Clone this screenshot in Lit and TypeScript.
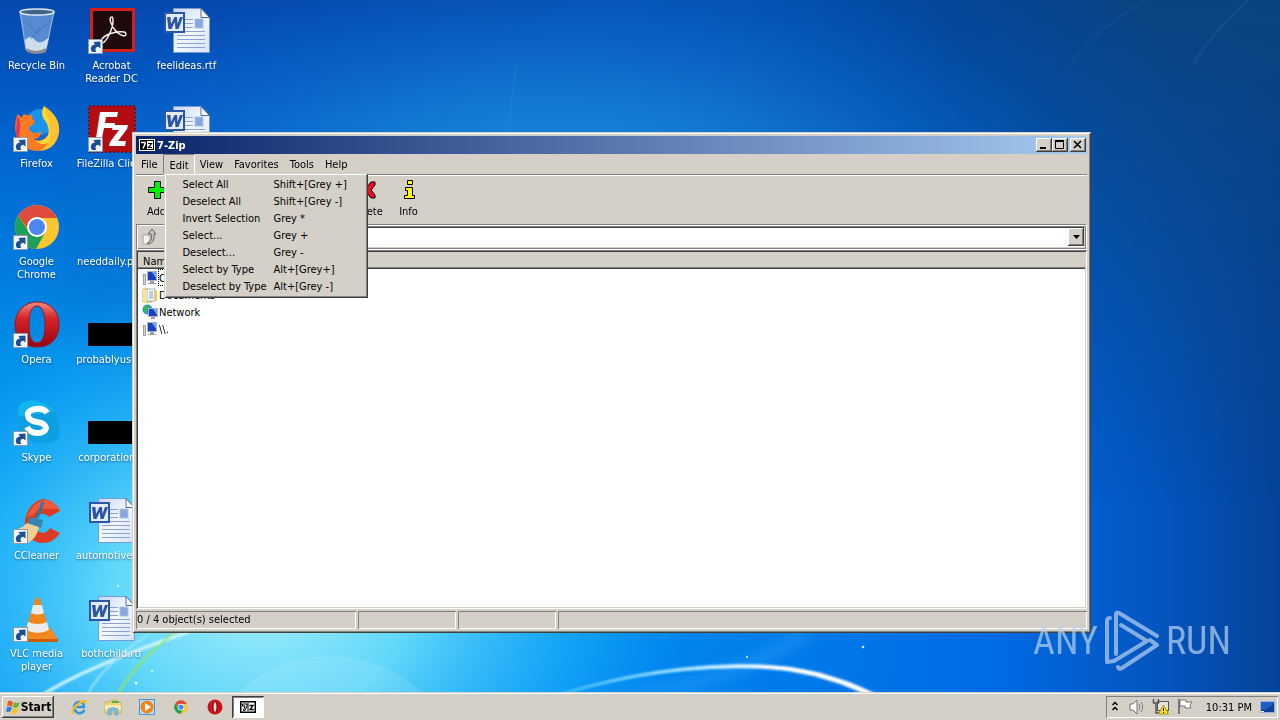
import { LitElement, html, svg, css, nothing, TemplateResult } from "lit";
import { customElement } from "lit/decorators.js";
import { classMap } from "lit/directives/class-map.js";

const shortcutArrow = svg`
  <g transform="translate(0 32)">
    <rect x=".5" y=".5" width="14" height="14" fill="#f4f6f8" stroke="#8d98a8"/>
    <path d="M4 13C1.500 9 3.500 6 7 5.500L5.500 3 12.500 2.500 12.500 9.500 10.300 7.700C7.500 8 6.800 10 8.300 13Z" fill="#1c4f94"/>
  </g>`;

const wordDoc = svg`
  <defs><linearGradient id="paper" x2="1" y2="1"><stop offset="0" stop-color="#c4d6f6"/><stop offset=".5" stop-color="#f4f8ff"/><stop offset="1" stop-color="#d4e2fa"/></linearGradient></defs>
  <path d="M10.500 1.500H38L46.500 10.500V45.500H10.500Z" fill="url(#paper)" stroke="#7a9ad4"/>
  <path d="M38 1.500V10.500H46.500Z" fill="#fff" stroke="#49689f"/>
  <rect x="32" y="12" width="8" height="9" fill="#86a8df" stroke="#a9c0ea"/>
  <path d="M22 12.500H30M22 16.500H30M22 20.500H30M22 24.500H42M14 28.500H42M14 32.500H42M14 36.500H42M14 40.500H42" stroke="#8aa3d4"/>
  <rect x="2" y="6" width="19" height="19" fill="#e3ebfa" stroke="#2b57a8" stroke-width="2"/>
  <path d="M4 10H7.500L8 17 11.500 10H14L14.500 17 17 10H20L15.500 22H12.500L11.800 15 8.500 22H5.500Z" fill="#2b54a4"/>`;

const icons: Record<string, TemplateResult> = {
  bin: svg`
    <path d="M7 5L13 43Q23 48 33 43L41 5Z" fill="#a9c9ee" fill-opacity=".5" stroke="#b9cde6" stroke-opacity=".8"/>
    <path d="M12 33Q17 27 22 33T36 30L33 42Q24 47 13 42Z" fill="#e5eaf0" fill-opacity=".85"/>
    <path d="M13 41Q23 47 33 41V45Q23 49 14 45Z" fill="#8a8c90"/>
    <ellipse cx="24" cy="5" rx="17" ry="3" fill="#40648c" stroke="#dce8f5" stroke-width="1.500"/>
    <path d="M12 14L24 26 37 14M18 32L27 20" stroke="#2d66aa" fill="none" opacity=".6"/>`,
  acrobat: svg`
    <rect x="3.500" y="2.500" width="42" height="41" fill="#1f0b0d" stroke="#d81f16" stroke-width="3"/>
    <path d="M24 10C20 10 23 18 27 23 31 28 38 31 38 27 38 23 27 25 21 27 14 30 11 35 14 36 18 36 25 22 25 14 25 11 25 10 24 10Z" fill="none" stroke="#f4eeee" stroke-width="1.500"/>
    ${shortcutArrow}`,
  word: wordDoc,
  firefox: svg`
    <circle cx="24" cy="24" r="19" fill="#1b62d4"/>
    <circle cx="27" cy="17" r="13" fill="#1a93ec"/>
    <path d="M4 10Q6 8 8 13L11 9Q14 11 18 10 20 10 19 14 23 15 21 19L16 22Q16 27 21 28 26 28 28 26 28 34 20 34 29 38 35 31 39 27 39 21 46 25 44 33 37 46 24 46 6 45 3 29 1 20 4 10Z" fill="#ff7a22"/>
    <path d="M31 1Q26 9 33 17 37 24 35 30 31 37 22 36 30 43 39 35 44 30 44 22Q42 10 31 1Z" fill="#ffd72f"/>
    <path d="M31 1Q48 12 46 28 43 44 27 46 39 38 37 25 36 12 31 1Z" fill="#ffc22d"/>
    <path d="M4 10Q9 18 6 30 9 41 18 45 4 42 3 28Z" fill="#f0304b"/>
    ${shortcutArrow}`,
  filezilla: svg`
    <rect x="1" y="1" width="46" height="46" fill="#b30d12" stroke="#7c0a10" stroke-width="2" stroke-dasharray="2 2"/>
    <path d="M12 7H30L29 12H18L17 18H27L26 23H16L14 33H8Z" fill="#fff"/>
    <path d="M25 20H40L39 24 30 36H38L37 41H21L22 37 31 25H24Z" fill="#fff"/>
    ${shortcutArrow}`,
  chrome: svg`
    <circle cx="24" cy="24" r="22" fill="#fbc62d"/>
    <path d="M5 13A22 22 0 0 1 44 15H24A9 9 0 0 0 15 26Z" fill="#e04a3d"/>
    <path d="M5 13A22 22 0 0 0 23 46L32 30A10 10 0 0 1 15 27Z" fill="#1fa05a"/>
    <circle cx="24" cy="24" r="10" fill="#fff"/><circle cx="24" cy="24" r="8" fill="#4b87ef"/>
    ${shortcutArrow}`,
  opera: svg`
    <defs><linearGradient id="op" x2="0" y2="1"><stop offset="0" stop-color="#f38d84"/><stop offset=".35" stop-color="#d8242a"/><stop offset="1" stop-color="#98040c"/></linearGradient></defs>
    <path fill-rule="evenodd" d="M24 1C37 1 46 10 46 24S37 46 24 46 2 37 2 24 11 1 24 1ZM24 5C18 5 16 13 16 24S18 42 24 42 32 34 32 24 30 5 24 5Z" fill="url(#op)" stroke="#a3121a"/>
    ${shortcutArrow}`,
  skype: svg`
    <path d="M13 2Q20 0 26 3 44 5 44 21 48 30 46 38 40 46 31 44 8 44 5 24 1 8 13 2Z" fill="#0c9fe2"/>
    <path d="M13 2Q20 0 26 3 36 5 41 12L6 18Q2 6 13 2Z" fill="#12b5ee"/>
    <path d="M34 14Q31 9 23 10 14 11 15 17 16 22 24 23T33 29Q32 34 24 34 17 34 14 28" fill="none" stroke="#fff" stroke-width="6"/>
    ${shortcutArrow}`,
  ccleaner: svg`
    <path d="M47 14L36 20Q30 13 23 21 20 33 29 36 34 36 37 31L47 36Q40 47 27 46 11 43 12 23 16 4 31 2 41 3 47 14Z" fill="#dd3a22"/>
    <path d="M31 3Q19 6 14 20L21 17Q26 10 36 12L46 12Q40 2 31 3Z" fill="#f0583a"/>
    <path d="M30 5L24 21" stroke="#2379a8" stroke-width="3"/>
    <path d="M17 20L30 23 28 31 14 28Z" fill="#3585b0"/>
    <path d="M14 26L26 30Q24 41 15 46 4 44 0 33 9 32 14 26Z" fill="#f1cf94"/>
    ${shortcutArrow}`,
  vlc: svg`
    <path d="M8 34L38 33 45 45H8Z" fill="#f08a20"/><path d="M8 44H45V47H8Z" fill="#c95f08"/>
    <path d="M24.500 2Q26 2 27 5L37 38Q25 45 12 38L22 5Q23 2 24.500 2Z" fill="#f28518"/>
    <path d="M20 10H29L31 18Q25 21 18 18ZM15 27Q25 31 34 27L36 35Q25 41 13 35Z" fill="#ecebea"/>
    ${shortcutArrow}`,
  line: svg`<path d="M2 45.500H48" stroke="#0a66b8"/>`,
  black: svg`<rect x="0" y="22" width="48" height="23" fill="#000"/>`,
};

const desktop: Array<[string, string]> = [
  ["bin", "Recycle Bin"], ["firefox", "Firefox"], ["chrome", "Google Chrome"], ["opera", "Opera"],
  ["skype", "Skype"], ["ccleaner", "CCleaner"], ["vlc", "VLC media player"],
  ["acrobat", "Acrobat Reader DC"], ["filezilla", "FileZilla Client"], ["line", "needdaily.png"],
  ["black", "probablyuse..."], ["black", "corporation..."], ["word", "automotive.rtf"], ["word", "bothchild.rtf"],
  ["word", "feelideas.rtf"], ["word", ""],
];

const sevenZip = html`<svg class="z" viewBox="0 0 16 12" aria-hidden="true">
  <rect x=".5" y=".5" width="15" height="11" fill="#fff" stroke="#fff"/>
  <rect x="1" y="1" width="14" height="10" fill="#000"/>
  <path d="M2 3.500H6V5L4 9.500" stroke="#fff" stroke-width="1.500" fill="none"/>
  <rect x="8" y="2" width="6" height="8" fill="#fff"/>
  <path d="M9 4.500H12.500L9.500 8.500H13" stroke="#000" stroke-width="1.200" fill="none"/></svg>`;

const sevenZipOutline = html`<svg class="z" viewBox="0 0 16 12" aria-hidden="true">
  <rect x=".75" y=".75" width="14.500" height="10.500" fill="#fff" stroke="#000" stroke-width="1.500"/>
  <path d="M2.500 3H7V5L5 9.500H3.500L5 5H2.500Z" stroke="#000" fill="#fff"/><path d="M8 2V10" stroke="#000"/>
  <path d="M9.500 4.500H13L10 8.500H13.800" stroke="#000" stroke-width="1.300" fill="none"/></svg>`;

const pcIcon = svg`
  <rect x="1.500" y="4.500" width="2" height="10" fill="#d8d8d8" stroke="#8a8a8a" stroke-width=".8"/>
  <rect x="5.500" y="1.500" width="9" height="9" fill="#1c3fc0" stroke="#a8b4c8"/>
  <path d="M10 2H14V8Z" fill="#7aa5f4"/><path d="M8 11H12V13H14V14H6V13H8Z" fill="#98a0ac"/>`;
const folderIcon = svg`
  <path d="M1 2H6L7 3H10V15H1Z" fill="#f3d777" stroke="#c9a23c"/>
  <rect x="5" y="2" width="8" height="12" fill="#f7fafc" stroke="#a7b4be"/>
  <path d="M7 5H11M7 7H11M7 9H11M7 11H11" stroke="#7ba7d6"/><path d="M1 2L5 3V15H1Z" fill="#f9e59a"/>
  <path d="M12 3L15 4V14H12Z" fill="#efcb62"/>`;
const netIcon = svg`
  <circle cx="5.500" cy="5.500" r="5" fill="#2d8fd8"/><path d="M2 2Q6 0 7 3L4 6 5 9Q1 8 1 5ZM7 5L10 4 9 8Z" fill="#3fb54a"/>
  <rect x="6.500" y="4.500" width="9" height="8" fill="#1c3fc0" stroke="#a8b4c8"/><path d="M11 5H15V11Z" fill="#7aa5f4"/>
  <path d="M9 13H13V15H9Z" fill="#98a0ac"/>`;

const menuItems = [
  ["Select All", "Shift+[Grey +]"], ["Deselect All", "Shift+[Grey -]"], ["Invert Selection", "Grey *"],
  ["Select...", "Grey +"], ["Deselect...", "Grey -"], ["Select by Type", "Alt+[Grey+]"], ["Deselect by Type", "Alt+[Grey -]"],
];

const tools: Array<[string, TemplateResult]> = [
  ["Add", svg`<path d="M9.500 3.500H15.500V9.500H21.500V14.500H15.500V20.500H9.500V14.500H3.500V9.500H9.500Z" fill="#00f000" stroke="#000"/>`],
  ["Extract", svg`<path d="M3 9H21V14H3Z" fill="#2060ff" stroke="#000"/>`],
  ["Test", svg`<path d="M3 8L12 19 21 8H16L12 13 8 8Z" fill="#00f000" stroke="#000"/>`],
  ["Copy", svg`<path d="M3 9H13V4L21 12 13 20V15H3Z" fill="#ffff00" stroke="#000"/>`],
  ["Move", svg`<path d="M3 9H13V4L21 12 13 20V15H3Z" fill="#40c0ff" stroke="#000"/>`],
  ["Delete", svg`<path d="M4 4H8L12 9 16 4H20V7L16 12 20 17V20H16L12 15 8 20H4V17L8 12 4 7Z" fill="#f01020" stroke="#000"/>`],
  ["Info", svg`<path d="M10.500 2.500H15.500V6.500H10.500ZM8.500 9.500H15.500V17.500H17.500V20.500H7.500V17.500H10.500V12.500H8.500Z" fill="#ffff00" stroke="#000"/>`],
];

@customElement("desktop-wallpaper")
class DesktopWallpaper extends LitElement {
  static styles = css`
    :host { display: block; }
    svg { display: block; width: 100%; height: 100%; }
  `;
  render() {
    return html`<svg viewBox="0 0 1280 720" preserveAspectRatio="none" aria-hidden="true">
      <defs>
        <linearGradient id="base" x2="0" y2="1">
          <stop offset="0" stop-color="#0548ae"/><stop offset=".2" stop-color="#0264d0"/>
          <stop offset=".5" stop-color="#008ee9"/><stop offset=".75" stop-color="#009cf6"/><stop offset="1" stop-color="#008ff4"/>
        </linearGradient>
        <linearGradient id="right">
          <stop offset=".4" stop-color="#0068e0" stop-opacity="0"/><stop offset=".78" stop-color="#006ae4"/>
          <stop offset=".9" stop-color="#0456c0"/><stop offset="1" stop-color="#05439a"/>
        </linearGradient>
        <linearGradient id="topright" x1=".4" y1="0" x2=".9" y2="0">
          <stop offset="0" stop-color="#05439c" stop-opacity="0"/><stop offset=".7" stop-color="#04428f" stop-opacity=".9"/><stop offset="1" stop-color="#0a4480"/>
        </linearGradient>
        <linearGradient id="fade" x2="0" y2="1"><stop offset="0" stop-color="#fff"/><stop offset=".7" stop-color="#000"/></linearGradient>
        <mask id="top"><rect width="1280" height="720" fill="url(#fade)"/></mask>
        <radialGradient id="upper"><stop offset="0" stop-color="#28a0e8"/><stop offset=".5" stop-color="#1680d4" stop-opacity=".7"/><stop offset="1" stop-color="#0a60c0" stop-opacity="0"/></radialGradient>
        <radialGradient id="glow"><stop offset="0" stop-color="#a4eefa"/><stop offset=".35" stop-color="#6cdffa" stop-opacity=".9"/><stop offset=".7" stop-color="#30bcfa" stop-opacity=".5"/><stop offset="1" stop-color="#10a0f8" stop-opacity="0"/></radialGradient>
        <linearGradient id="arc"><stop offset="0" stop-color="#60d0ff" stop-opacity=".6"/><stop offset=".5" stop-color="#c8f2ff"/><stop offset=".65" stop-color="#fff"/></linearGradient>
        <filter id="soft"><feGaussianBlur stdDeviation="1"/></filter>
        <filter id="wide"><feGaussianBlur stdDeviation="6"/></filter>
      </defs>
      <rect width="1280" height="720" fill="url(#base)"/>
      <rect width="1280" height="720" fill="url(#right)"/>
      <rect width="1280" height="720" fill="url(#topright)" mask="url(#top)"/>
      <ellipse cx="560" cy="240" rx="540" ry="300" fill="url(#upper)"/>
      <ellipse cx="260" cy="600" rx="430" ry="330" fill="url(#glow)"/>
      <circle cx="330" cy="790" r="134" fill="#fff" opacity=".1"/>
      <path d="M620 700Q740 680 810 630" fill="none" stroke="#40a8ff" stroke-width="14" opacity=".3" filter="url(#wide)"/>
      <g fill="none" filter="url(#soft)">
        <path d="M556 695Q660 662 760 665Q820 666 878 695H868Q815 670 760 668Q662 665 560 695Z" fill="url(#arc)" stroke="url(#arc)"/>
        <path d="M44 694Q90 665 200 628" stroke="#d0f6ff" stroke-width="3"/>
        <path d="M88 694Q105 660 170 620" stroke="#a0e8ff" stroke-width="2"/>
        <path d="M118 694Q140 655 192 620" stroke="#98e850" stroke-width="2"/>
        <path d="M1248 0Q1210 35 1194 64" stroke="#5088b8" stroke-width="1.500" opacity=".3"/>
        <path d="M1145 0Q1090 35 1070 64" stroke="#4080b8" stroke-width="3" opacity=".1"/>
        <path d="M516 64L508 134" stroke="#40a0e0" opacity=".4"/>
      </g>
      <g fill="#d8f8ff"><circle cx="747" cy="657" r="1"/><circle cx="863" cy="647" r="1.300"/><circle cx="136" cy="683" r="1.500"/><circle cx="152" cy="671" r="1"/><circle cx="118" cy="586" r="1"/></g>
    </svg>`;
  }
}

@customElement("zip-window")
class ZipWindow extends LitElement {
  static styles = css`
    :host {
      display: flex; flex-direction: column; box-sizing: border-box; padding: 4px; background: #d4d0c8; color: #000;
      box-shadow: inset 1px 1px #d4d0c8, inset -1px -1px #404040, inset 2px 2px #fff, inset -2px -2px #808080;
    }
    button, select { font: inherit; color: inherit; border: 0; padding: 0; margin: 0; background: none; border-radius: 0; }
    .title { display: flex; align-items: center; gap: 2px; height: 18px; padding: 0 1px 0 3px; background: linear-gradient(90deg, #0a246a, #a6caf0); color: #fff; font-weight: 700; }
    .z { width: 16px; height: 12px; flex: none; }
    .name { flex: 1; }
    .cap { display: flex; }
    .cap button { width: 16px; height: 14px; background: #d4d0c8; box-shadow: inset -1px -1px #404040, inset 1px 1px #fff, inset -2px -2px #808080; }
    .cap button:last-child { margin-left: 2px; }
    .cap svg { display: block; width: 16px; height: 14px; }
    .menubar { display: flex; height: 20px; }
    .menu { position: relative; display: flex; }
    .menu > button { padding: 0 6px 0 5px; border: 1px solid transparent; border-width: 1px 0; }
    .menu.open > button { padding: 2px 5px 0; border-width: 1px; border-color: #808080 #fff #fff #808080; }
    .popup {
      position: absolute; z-index: 2; top: 19px; left: 1px; margin: 0; padding: 3px; box-sizing: border-box; width: 204px; list-style: none; background: #d4d0c8;
      box-shadow: inset 1px 1px #d4d0c8, inset -1px -1px #404040, inset 2px 2px #fff, inset -2px -2px #808080;
    }
    .popup button { display: grid; grid-template-columns: 91px 1fr; width: 100%; height: 17px; align-items: center; padding-left: 15px; text-align: left; white-space: nowrap; }
    .toolbar { display: flex; gap: 1px; height: 49px; border-top: 1px solid #808080; box-shadow: inset 0 1px #fff; }
    .toolbar button { display: flex; flex-direction: column; align-items: center; width: 41px; padding-top: 3px; gap: 3px; }
    .toolbar svg { width: 24px; height: 24px; }
    .address { display: flex; align-items: center; box-sizing: border-box; height: 26px; border: 1px solid #808080; border-right-color: #fff; border-bottom-color: #fff; box-shadow: inset 1px 1px #fff, inset -1px -1px #808080; padding: 0 1px 0 0; }
    .up { width: 24px; height: 22px; display: grid; place-items: center; }
    .up svg { width: 18px; height: 18px; }
    .combo { display: flex; flex: 1; box-sizing: border-box; height: 22px; margin-left: 4px; padding: 2px 1px 2px 2px; background: #fff; box-shadow: inset 1px 1px #808080, inset -1px -1px #d4d0c8, inset 2px 2px #404040; }
    .combo select { appearance: none; flex: 1; outline: none; }
    .drop { width: 16px; background: #d4d0c8; display: grid; place-items: center; box-shadow: inset -1px -1px #404040, inset 1px 1px #fff, inset -2px -2px #808080; }
    .drop svg { width: 7px; height: 4px; }
    .list { flex: 1; min-height: 0; padding: 2px; background: #fff; box-shadow: inset 1px 1px #808080, inset -1px -1px #fff, inset 2px 2px #404040, inset -2px -2px #d4d0c8; }
    table { width: 100%; border-collapse: collapse; }
    th { height: 16px; padding: 1px 5px 0; text-align: left; font-weight: 400; background: #d4d0c8; box-shadow: inset 0 -1px #404040, inset 0 -2px #808080; }
    td { height: 17px; padding: 0 0 0 4px; }
    .file { display: flex; align-items: center; gap: 1px; height: 17px; }
    .file svg { width: 16px; height: 16px; }
    .file span { padding-top: 2px; }
    .focus { outline: 1px dotted #000; }
    .status { display: grid; grid-template-columns: 220px 98px 98px 1fr; column-gap: 2px; height: 18px; padding-top: 2px; }
    .status div { box-sizing: border-box; line-height: 18px; padding-left: 1px; box-shadow: inset 1px 1px #808080, inset -1px -1px #fff; }
  `;
  private popup() {
    return html`<ul class="popup">${menuItems.map(([name, key]) => html`<li><button><span>${name}</span><span>${key}</span></button></li>`)}</ul>`;
  }
  render() {
    const files: Array<[TemplateResult, string]> = [[pcIcon, "Computer"], [folderIcon, "Documents"], [netIcon, "Network"], [pcIcon, "\\\\."]];
    return html`
      <div class="title">${sevenZip}<span class="name">7-Zip</span>
        <div class="cap">
          <button aria-label="Minimize"><svg viewBox="0 0 16 14"><path d="M4 10H10" stroke="#000" stroke-width="2"/></svg></button>
          <button aria-label="Maximize"><svg viewBox="0 0 16 14"><path d="M3.500 3V10.500H11.500V3" fill="none" stroke="#000"/><path d="M3 3H12" stroke="#000" stroke-width="2"/></svg></button>
          <button aria-label="Close"><svg viewBox="0 0 16 14"><path d="M4 3L11 10M11 3L4 10" stroke="#000" stroke-width="1.600"/></svg></button>
        </div>
      </div>
      <nav class="menubar">${["File", "Edit", "View", "Favorites", "Tools", "Help"].map((m) => html`
        <div class=${classMap({ menu: true, open: m === "Edit" })}><button>${m}</button>${m === "Edit" ? this.popup() : nothing}</div>`)}
      </nav>
      <div class="toolbar">${tools.map(([name, icon]) => html`<button><svg viewBox="0 0 24 24" aria-hidden="true">${icon}</svg><span>${name}</span></button>`)}</div>
      <div class="address">
        <button class="up" aria-label="Up one level"><svg viewBox="0 0 18 18"><path d="M3 7H8L10 9V16H3Z" fill="#f4f4f2" stroke="#a0a0a0"/><path d="M7 15Q13 13 11 6H8L12 1 16 6H14Q15 14 9 16Z" fill="#c4c4c0" stroke="#606060"/></svg></button>
        <div class="combo"><select aria-label="Path"><option></option></select><span class="drop"><svg viewBox="0 0 7 4"><path d="M0 0H7L3.500 4Z"/></svg></span></div>
      </div>
      <div class="list"><table>
        <thead><tr><th>Name</th></tr></thead>
        <tbody>${files.map(([icon, name], i) => html`<tr><td><div class="file"><svg viewBox="0 0 16 16" aria-hidden="true">${icon}</svg><span class=${classMap({ focus: i === 0 })}>${name}</span></div></td></tr>`)}</tbody>
      </table></div>
      <div class="status"><div>0 / 4 object(s) selected</div><div></div><div></div><div></div></div>`;
  }
}

@customElement("task-bar")
class TaskBar extends LitElement {
  static styles = css`
    :host { display: flex; align-items: center; box-sizing: border-box; height: 28px; padding: 2px 2px 0; background: #d4d0c8; color: #000; box-shadow: inset 0 1px #d4d0c8, inset 0 2px #fff; }
    button { font: inherit; color: inherit; border: 0; padding: 0; background: none; display: grid; place-items: center; }
    .start { display: flex; align-items: center; justify-content: center; width: 52px; height: 22px; font-weight: 700; font-size: 12px; box-shadow: inset -1px -1px #404040, inset 1px 1px #fff, inset -2px -2px #808080; }
    .start svg { width: 16px; height: 16px; }
    .quick { display: flex; flex: 1; margin-left: 8px; }
    .quick button { width: 34px; height: 22px; }
    .quick svg { width: 18px; height: 18px; }
    .quick .active { width: 32px; background: #fff; box-shadow: inset 1px 1px #404040, inset -1px -1px #fff, inset 2px 2px #808080; }
    .quick svg.z { width: 16px; height: 12px; }
    .tray { display: flex; align-items: center; box-sizing: border-box; height: 22px; padding: 0 2px 0 5px; gap: 6px; box-shadow: inset 1px 1px #808080, inset -1px -1px #fff; }
    .tray svg { width: 18px; height: 18px; }
    .tray .chev { width: 8px; margin-right: 3px; }
    .time { margin-left: 6px; white-space: nowrap; }
  `;
  render() {
    return html`
      <button class="start"><svg viewBox="0 0 16 16" aria-hidden="true">
        <path d="M3 2Q5 1 8 3L7 8Q4 6 2 7Z" fill="#ee5a24"/><path d="M9 3Q12 5 15 3L13 8Q10 10 8 8Z" fill="#6cb82c"/>
        <path d="M2 8Q4 7 7 9L5 13Q3 12 1 13Z" fill="#2c7be0"/><path d="M8 9Q10 11 13 9L12 14Q9 16 6 14Z" fill="#fcc21c"/></svg>Start</button>
      <nav class="quick">
        <button aria-label="Internet Explorer"><svg viewBox="0 0 18 18"><path d="M14.500 12Q12 16 8 15 4 13 4 9 5 4 9 4 14 4 14 9H5" fill="none" stroke="#2f97e4" stroke-width="2.500"/><path d="M2 16Q-1 14 5 7 12 1 16 2 18 3 16 6 16 4 12 5 5 9 3 14 3 16 6 15 4 17 2 16Z" fill="#f3bd2c"/></svg></button>
        <button aria-label="Explorer"><svg viewBox="0 0 18 18"><path d="M1 4H6L7 2H13L14 4H17V15H1Z" fill="#f0d478" stroke="#c8a040" stroke-width=".7"/><path d="M8 3H15V5H8Z" fill="#4fae5e"/><path d="M1 7H17V12H1Z" fill="#fbeaa8"/><path d="M4 17V11Q9 8 14 11V17H11V13H7V17Z" fill="#82bdec" stroke="#4f93cc" stroke-width=".6"/></svg></button>
        <button aria-label="Media Player"><svg viewBox="0 0 18 18"><rect x="1.500" y="1.500" width="15" height="15" fill="#b8dcf6" stroke="#4898d8"/><circle cx="9" cy="9" r="6.500" fill="#f48418"/><path d="M7 5L13 9 7 13Z" fill="#fff"/></svg></button>
        <button aria-label="Chrome"><svg viewBox="0 0 48 48">
          <circle cx="24" cy="24" r="18" fill="#fbc62d"/><path d="M9 14A18 18 0 0 1 40 16H24L15 26Z" fill="#e04a3d"/><path d="M9 14A18 18 0 0 0 23 42L30 30 15 26Z" fill="#1fa05a"/><circle cx="24" cy="24" r="9" fill="#fff"/><circle cx="24" cy="24" r="7" fill="#4b87ef"/></svg></button>
        <button aria-label="Opera"><svg viewBox="0 0 18 18"><circle cx="9" cy="9" r="7.500" fill="#c8141c"/><ellipse cx="9" cy="9" rx="2" ry="5.500" fill="#f3d8d4" stroke="#7c060c"/></svg></button>
        <button class="active" aria-label="7-Zip">${sevenZipOutline}</button>
      </nav>
      <div class="tray">
        <svg class="chev" viewBox="0 0 8 18"><path d="M1.500 7L4 4.500 6.500 7M1.500 12L4 9.500 6.500 12" fill="none" stroke="#000" stroke-width="1.500"/></svg>
        <svg viewBox="0 0 18 18"><path d="M2 6H5L9 2V16L5 12H2Z" fill="#fff" stroke="#707070"/><path d="M11 6Q13 9 11 12M13 4Q16.500 9 13 14" fill="none" stroke="#808080"/></svg>
        <svg viewBox="0 0 18 18"><rect x="5.500" y="3.500" width="11" height="9" fill="#e4e2dc" stroke="#555"/><path d="M1.500 1V5H6.500V1M4 5V15H8" fill="none" stroke="#555" stroke-width="1.500"/><path d="M11.500 7L16.500 16H6.500Z" fill="#ffe02c" stroke="#b09000"/><path d="M11.500 10V13M11.500 14V15" stroke="#000"/></svg>
        <svg viewBox="0 0 18 18"><path d="M3 1V16" stroke="#777" stroke-width="2"/><path d="M4 2H10V4H16L14 7 15 10H9V8H4Z" fill="#fff" stroke="#777"/></svg>
        <span class="time">10:31 PM</span>
        <svg viewBox="0 0 18 18"><rect x="2.500" y="3.500" width="14" height="11" fill="#1d5fc4" stroke="#8ab4e8"/><path d="M3 12Q10 12 16 5V14H3Z" fill="#123f94"/><path d="M3 13H6V14H3Z" fill="#fff"/></svg>
      </div>`;
  }
}

@customElement("app-root")
class AppRoot extends LitElement {
  static styles = css`
    :host { display: flex; flex-direction: column; position: relative; height: 100vh; overflow: hidden; font: 11px/13px Tahoma, "DejaVu Sans Condensed", "DejaVu Sans", sans-serif; }
    .back { position: absolute; inset: 0; }
    .desk { position: relative; flex: 1; min-height: 0; }
    .icons { display: grid; grid-auto-flow: column; grid-template-rows: repeat(7, 98px); grid-auto-columns: 73px; column-gap: 2px; width: max-content; margin: 0; padding: 7px 0 0; list-style: none; color: #fff; }
    .icons a { display: flex; flex-direction: column; align-items: center; gap: 4px; color: inherit; text-decoration: none; text-align: center; text-shadow: 0 1px 2px rgba(0, 20, 70, .6); }
    .icons svg { width: 48px; height: 48px; }
    zip-window { position: absolute; top: 132px; left: 132px; right: 189px; bottom: 59px; }
    .mark { position: absolute; right: 49px; bottom: 20px; display: flex; align-items: center; gap: 6px; color: #b9d3f2; opacity: .7; font: 38px/62px "Roboto Condensed", "Liberation Sans Narrow", "Open Sans Condensed", sans-serif; }
    .mark svg { width: 56px; height: 62px; }
    task-bar { position: relative; }
  `;
  render() {
    return html`
      <desktop-wallpaper class="back"></desktop-wallpaper>
      <main class="desk">
        <ul class="icons">${desktop.map((d) => html`<li><a href="#"><svg viewBox="0 0 48 48" aria-hidden="true">${icons[d[0]]}</svg><span>${d[1]}</span></a></li>`)}</ul>
        <zip-window></zip-window>
        <div class="mark"><span>ANY</span>
          <svg viewBox="0 0 56 62" aria-hidden="true"><g fill="none" stroke="#b9d3f2" stroke-width="4" stroke-linejoin="round" stroke-linecap="round"><path d="M6 8Q3 8 3 11V52L10 51 43 31 17 15"/><path d="M12 44V4Q12 2 15 3L53 26M14 57Q15 60 18 58L53 35 46 30"/></g></svg>
          <span>RUN</span></div>
      </main>
      <task-bar></task-bar>`;
  }
}
